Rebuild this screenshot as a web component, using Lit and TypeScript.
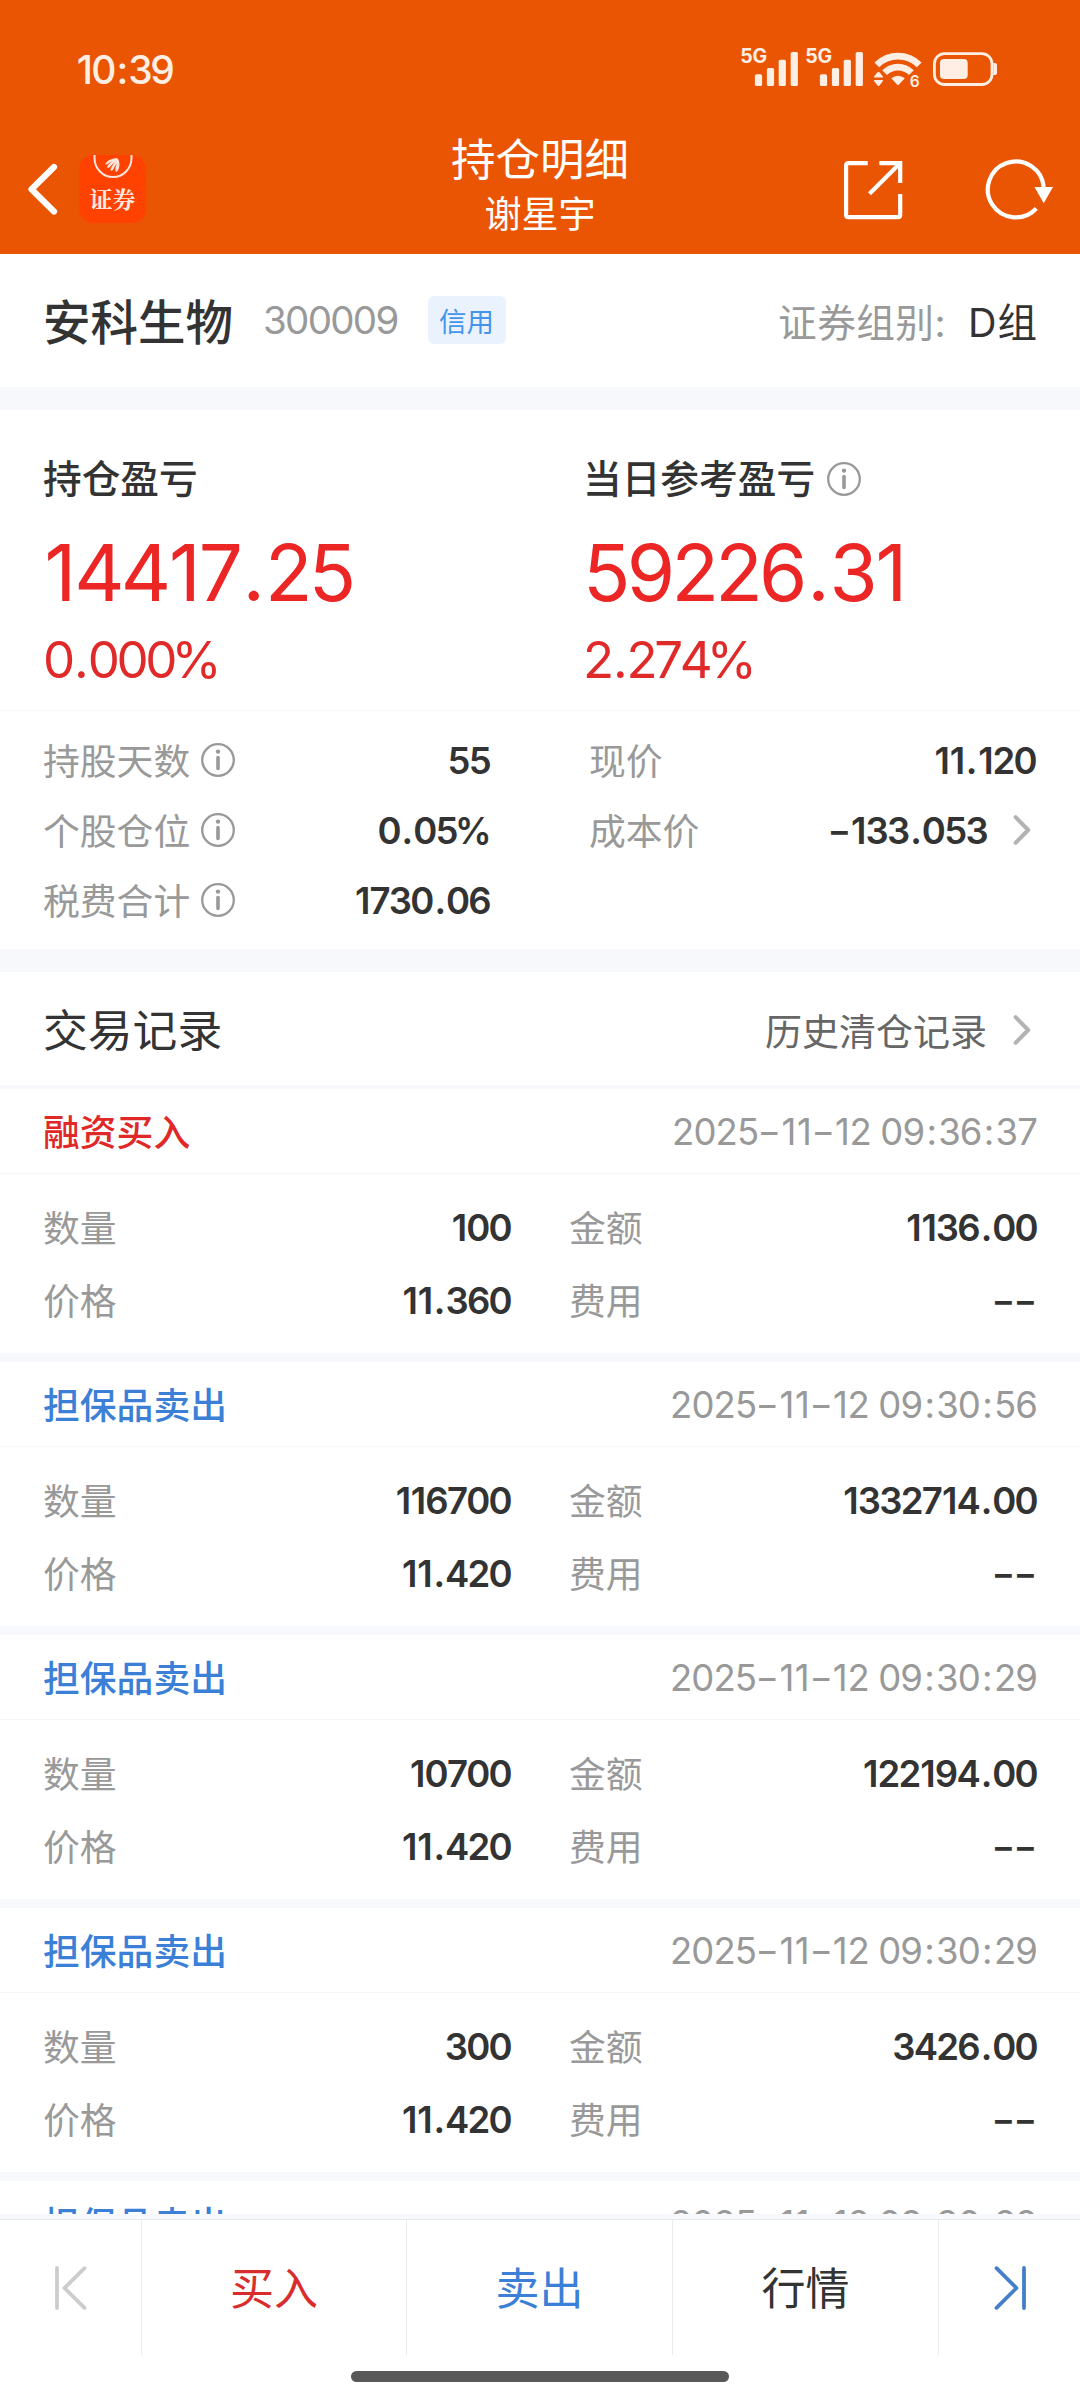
import { LitElement, html, css, svg } from "lit";
import { customElement, property } from "lit/decorators.js";

interface TradeRecord {
  kind: "buy" | "sell";
  title: string;
  time: string;
  quantity: string;
  price: string;
  amount: string;
  fee: string;
}

const RECORDS: TradeRecord[] = [
  { kind: "buy", title: "融资买入", time: "2025-11-12 09:36:37", quantity: "100", price: "11.360", amount: "1136.00", fee: "--" },
  { kind: "sell", title: "担保品卖出", time: "2025-11-12 09:30:56", quantity: "116700", price: "11.420", amount: "1332714.00", fee: "--" },
  { kind: "sell", title: "担保品卖出", time: "2025-11-12 09:30:29", quantity: "10700", price: "11.420", amount: "122194.00", fee: "--" },
  { kind: "sell", title: "担保品卖出", time: "2025-11-12 09:30:29", quantity: "300", price: "11.420", amount: "3426.00", fee: "--" },
  { kind: "sell", title: "担保品卖出", time: "2025-11-12 09:30:29", quantity: "300", price: "11.420", amount: "3426.00", fee: "--" },
];

const figureStyles = css`
  .figure { font-kerning: none; }
  .one { margin: 0 0.02em; }
  .dot { margin: 0 0.045em; }
  .colon { margin: 0 0.06em; }
  .percent { margin-left: -0.05em; }
  .dash { display: inline-block; width: 0.62em; text-align: center; letter-spacing: 0; transform: scaleX(1.4); }
`;

const GLYPH_CLASS: Record<string, string> = { "-": "dash", ".": "dot", ":": "colon", "1": "one", "%": "percent" };

/** Figures with a wide dash and looser punctuation. */
const figure = (text: string) =>
  text.split(/([-.:1%])/).map((part) =>
    GLYPH_CLASS[part] ? html`<span class=${GLYPH_CLASS[part]}>${part}</span>` : part);

const infoIcon = html`<svg class="info" width="34" height="34" viewBox="0 0 34 34" fill="none">
  <circle cx="17" cy="17" r="15.8" stroke="#999" stroke-width="2.3" />
  <circle cx="17" cy="8.6" r="2.2" fill="#999" />
  <path d="M17 14.5V25.5" stroke="#999" stroke-width="3.6" stroke-linecap="round" />
</svg>`;

const chevronIcon = html`<svg class="chevron" width="20" height="34" viewBox="0 0 20 34" fill="none">
  <path d="M3.6 4.2L16.2 17L3.6 29.8" stroke="#b3b3b3" stroke-width="4" stroke-linecap="round" stroke-linejoin="round" />
</svg>`;

@customElement("status-bar")
class StatusBar extends LitElement {
  static styles = [figureStyles, css`
    :host { display: flex; justify-content: space-between; height: 104px; padding: 35px 83px 0 76px; box-sizing: border-box; color: #ffeee3; }
    .time { font-size: 39px; line-height: 70px; font-weight: 500; letter-spacing: -2.4px; }
    .icons { display: block; }
    .gen { font: 700 19.5px "Inter", sans-serif; letter-spacing: -0.3px; }
    .six { font: 600 15.5px "Inter", sans-serif; }
  `];
  private signal(x: number) {
    return svg`<g transform="translate(${x} 0)" fill="#ffeee3">
      <text class="gen" x="0" y="27.6">5G</text>
      <rect x="14.6" y="39.3" width="7.2" height="11.7" rx="1.6" />
      <rect x="26.6" y="33" width="7.2" height="18" rx="1.6" />
      <rect x="38.4" y="24.7" width="7.2" height="26.3" rx="1.6" />
      <rect x="50.4" y="17" width="7.2" height="34" rx="1.6" />
    </g>`;
  }
  render() {
    return html`<div class="time figure">${figure("10:39")}</div>
      <svg class="icons" width="257" height="60" viewBox="0 0 257 60" fill="none">
        ${this.signal(0.3)} ${this.signal(65.3)}
        <g stroke="#ffeee3" stroke-width="6.8">
          <path d="M136.8 29.8A30 30 0 0 1 179.2 29.8" />
          <path d="M144.6 37.6A19 19 0 0 1 171.4 37.6" />
        </g>
        <path d="M151.2 43.2Q158 38.2 164.8 43.2L159 49.4Q158 50.4 157 49.4Z" fill="#ffeee3" />
        <path d="M134.2 42.6Q133.6 42 134.4 41L137.5 37.2Q138.5 36.2 139.5 37.2L142.6 41Q143.4 42 142.8 42.6ZM134.2 45Q133.6 45.6 134.4 46.6L137.5 50.6Q138.5 51.6 139.5 50.6L142.6 46.6Q143.4 45.6 142.8 45Z" fill="#ffeee3" />
        <text class="six" x="169.8" y="52" fill="#ffeee3">6</text>
        <rect x="194.4" y="18.7" width="57.6" height="30.8" rx="10" stroke="#ffeee3" stroke-width="2.8" />
        <rect x="200" y="24" width="27.7" height="20" rx="4" fill="#ffeee3" />
        <path d="M253.3 28H255Q257 28 257 30V38Q257 40 255 40H253.3Z" fill="#ffeee3" />
      </svg>`;
  }
}

@customElement("nav-bar")
class NavBar extends LitElement {
  static styles = css`
    :host { display: grid; grid-template-columns: 1fr auto 1fr; align-items: start; height: 150px; padding: 0 26px; box-sizing: border-box; color: #fff; }
    .left { display: flex; align-items: center; gap: 20px; padding-top: 51px; }
    .brand { width: 67px; height: 68px; border-radius: 14px; background: #ff4200; overflow: hidden; display: flex; flex-direction: column; align-items: center; }
    .brand-name { font: 700 23px/26px "Noto Serif CJK SC", "Noto Sans CJK SC", sans-serif; margin-top: 6px; color: #ffece4; }
    .arc { display: block; }
    .titles { text-align: center; padding-top: 26px; }
    .title { font-size: 44.5px; line-height: 60px; }
    .subtitle { font-size: 37px; line-height: 50px; }
    .right { display: flex; justify-content: flex-end; gap: 80px; padding-top: 55px; }
  `;
  render() {
    return html`<div class="left">
        <svg width="33" height="54" viewBox="0 0 33 54" fill="none">
          <path d="M28 5L5.5 27.3L28 49.5" stroke="#fff" stroke-width="6.2" stroke-linecap="round" stroke-linejoin="round" />
        </svg>
        <div class="brand">
          <svg class="arc" width="42" height="25" viewBox="0 0 42 25" fill="none">
            <path d="M2.5 0V3A18.5 19 0 0 0 39.500 3V0" stroke="#ffe5dc" stroke-width="2" />
            <path d="M13.200 9.500C14.500 5.500 20 3 25.500 3.200C28.500 7 28 14 24.500 17C22.300 16 23.500 11.500 25 8.500C22 11.500 21.500 15.500 19.500 15.800C17 15.500 20 10.500 23 7.500C19.500 9 18 13 16 13C14 12 16.500 9 20 6.500C17.500 7 15.500 10 13.200 9.500Z" fill="#ffe5dc" />
          </svg>
          <div class="brand-name">证券</div>
        </div>
      </div>
      <div class="titles">
        <div class="title">持仓明细</div>
        <div class="subtitle">谢星宇</div>
      </div>
      <div class="right">
        <svg width="62" height="62" viewBox="0 0 62 62" fill="none" stroke="#fff" stroke-width="4.2">
          <path d="M25.7 4.1H6.6Q4.1 4.1 4.1 6.6V55.7Q4.1 58.2 6.6 58.2H55.7Q58.2 58.2 58.2 55.7V35" />
          <path d="M37.3 4.1H58.2V24M27.5 34.8L57.5 4.8" />
        </svg>
        <svg width="70" height="62" viewBox="0 0 70 62" fill="none">
          <path d="M60.4 28A28 28 0 1 0 53 49.5" transform="translate(-.7 0)" stroke="#fff" stroke-width="4.2" />
          <path d="M50.500 28H69L59.700 44.300Z" fill="#fff" />
        </svg>
      </div>`;
  }
}

@customElement("trade-record")
class TradeRecordCard extends LitElement {
  @property({ attribute: false }) record!: TradeRecord;
  static styles = [figureStyles, css`
    :host { display: block; height: 264px; border-bottom: 9px solid #f6f8fb; background: #fff; flex: none; }
    .head { display: flex; justify-content: space-between; align-items: center; height: 85px; padding: 0 43px; border-bottom: 1px solid #f5f6f8; box-sizing: border-box; }
    .kind { font-size: 36.8px; font-weight: 500; padding-bottom: 3px; }
    .buy { color: #e02828; }
    .sell { color: #3b7fd6; }
    .time { font-size: 36.5px; letter-spacing: -0.9px; color: #999; padding-top: 2px; }
    .grid { display: grid; grid-template-columns: 468px 468px; column-gap: 58px; padding: 17px 0 0 43px; }
    .cell { display: flex; justify-content: space-between; align-items: center; height: 73px; }
    .label { font-size: 36.8px; color: #999; padding-bottom: 4px; }
    .value { font-size: 36.5px; font-weight: 600; letter-spacing: -1.7px; color: #333; padding-top: 1px; }
  `];
  private cell(label: string, value: string) {
    return html`<div class="cell"><span class="label">${label}</span><span class="value figure">${figure(value)}</span></div>`;
  }
  render() {
    const r = this.record;
    return html`<div class="head"><span class="kind ${r.kind}">${r.title}</span><span class="time figure">${figure(r.time)}</span></div>
      <div class="grid">
        ${this.cell("数量", r.quantity)} ${this.cell("金额", r.amount)}
        ${this.cell("价格", r.price)} ${this.cell("费用", r.fee)}
      </div>`;
  }
}

@customElement("action-bar")
class ActionBar extends LitElement {
  static styles = css`
    :host { display: block; height: 186px; flex: none; background: #fff; border-top: 5px solid #f6f8fb; box-sizing: border-box; }
    .actions { display: grid; grid-template-columns: 142px 265px 266px 266px 141px; height: 136px; border-top: 1px solid #e8eaec; box-sizing: border-box; }
    .action { display: flex; align-items: center; justify-content: center; font-size: 44px; border-right: 1px solid #e9ebed; }
    .action:last-child { border-right: 0; }
    .text { padding-bottom: 3px; }
    .buy { color: #d92c2c; }
    .sell { color: #3b7fd6; }
    .quote { color: #333; }
    .home { width: 378px; height: 11px; border-radius: 6px; background: #585858; margin: 16px auto 0; }
  `;
  render() {
    return html`<div class="actions">
        <div class="action"><svg width="36" height="48" viewBox="0 0 36 48" fill="none" stroke="#ccc" stroke-width="3.8" stroke-linecap="round" stroke-linejoin="round"><path d="M4 4V44M31.5 4.2L11.5 24L31.5 43.8" /></svg></div>
        <div class="action text buy">买入</div>
        <div class="action text sell">卖出</div>
        <div class="action text quote">行情</div>
        <div class="action"><svg width="36" height="48" viewBox="0 0 36 48" fill="none" stroke="#437fca" stroke-width="3.8" stroke-linecap="round" stroke-linejoin="round"><path d="M32 4V44M4.5 4.2L24.5 24L4.5 43.8" /></svg></div>
      </div>
      <div class="home"></div>`;
  }
}

@customElement("app-root")
class AppRoot extends LitElement {
  static styles = [figureStyles, css`
    :host { display: flex; flex-direction: column; width: 1080px; height: 2400px; overflow: hidden; background: #fff; color: #333; font-family: "Inter", "Noto Sans CJK SC", sans-serif; font-feature-settings: "calt" 0; white-space: nowrap; }
    .top { background: #ea5504; height: 254px; flex: none; }
    .band { height: 23px; background: #f6f8fb; flex: none; }
    .stock { display: flex; align-items: center; height: 133px; padding: 0 44px 1px 43px; box-sizing: border-box; flex: none; }
    .name { font-size: 47.5px; font-weight: 500; padding-bottom: 1px; }
    .code { font-size: 38.5px; letter-spacing: -1.7px; color: #999; margin-left: 30px; }
    .badge { display: flex; align-items: center; justify-content: center; width: 78px; height: 48px; border-radius: 6px; background: #eaf3fd; color: #4494ea; font-size: 27.5px; margin-left: 30px; padding-bottom: 1px; box-sizing: border-box; }
    .group { margin-left: auto; font-size: 38.7px; display: flex; align-items: baseline; gap: 22px; padding-bottom: 2px; }
    .group-label { color: #999; letter-spacing: 0.4px; }
    .group-value { font-size: 39.5px; letter-spacing: 1px; margin-right: -2px; }
    .summary { display: grid; grid-template-columns: 540px 540px; height: 301px; border-bottom: 1px solid #f5f6f8; padding-top: 43px; box-sizing: border-box; flex: none; }
    .col { padding-left: 43px; }
    .heading { display: flex; align-items: center; gap: 12px; font-size: 38.7px; line-height: 52px; font-weight: 500; }
    .big { font-size: 78px; line-height: 92px; margin-top: 22px; letter-spacing: -3.7px; color: #ec2525; }
    .pct { font-size: 51px; line-height: 60px; margin-top: 11px; letter-spacing: -3.4px; color: #e02a2a; }
    .facts { display: grid; grid-template-columns: 447px 447px; column-gap: 99px; grid-auto-rows: 70px; padding: 14px 0 0 43px; height: 238px; box-sizing: border-box; flex: none; }
    .fact { display: flex; align-items: center; }
    .label { font-size: 36.8px; color: #999; padding-bottom: 3px; }
    .fact .info { margin-left: 11px; }
    .value { margin-left: auto; font-size: 36.5px; font-weight: 600; letter-spacing: -1.7px; padding-top: 2px; }
    .chevron { margin: 0 4px 0 25px; flex: none; }
    .records-head { display: flex; align-items: center; justify-content: space-between; height: 117px; padding: 0 44px 0 43px; border-bottom: 4px solid #f6f8fb; box-sizing: border-box; flex: none; }
    .records-title { font-size: 44.8px; padding-bottom: 3px; }
    .history { display: flex; align-items: center; font-size: 37px; color: #666; padding-top: 3px; }
    .list { height: 1125px; overflow: hidden; display: flex; flex-direction: column; flex: none; }
  `];
  render() {
    return html`
      <div class="top"><status-bar></status-bar><nav-bar></nav-bar></div>
      <div class="stock">
        <span class="name">安科生物</span><span class="code">300009</span><span class="badge">信用</span>
        <div class="group"><span class="group-label">证券组别:</span><span class="group-value">D组</span></div>
      </div>
      <div class="band"></div>
      <div class="summary">
        <div class="col">
          <div class="heading">持仓盈亏</div>
          <div class="big figure">${figure("14417.25")}</div>
          <div class="pct figure">${figure("0.000%")}</div>
        </div>
        <div class="col">
          <div class="heading">当日参考盈亏${infoIcon}</div>
          <div class="big figure">${figure("59226.31")}</div>
          <div class="pct figure">${figure("2.274%")}</div>
        </div>
      </div>
      <div class="facts">
        <div class="fact"><span class="label">持股天数</span>${infoIcon}<span class="value figure">55</span></div>
        <div class="fact"><span class="label">现价</span><span class="value figure">${figure("11.120")}</span></div>
        <div class="fact"><span class="label">个股仓位</span>${infoIcon}<span class="value figure">${figure("0.05%")}</span></div>
        <div class="fact"><span class="label">成本价</span><span class="value figure">${figure("-133.053")}</span>${chevronIcon}</div>
        <div class="fact"><span class="label">税费合计</span>${infoIcon}<span class="value figure">${figure("1730.06")}</span></div>
      </div>
      <div class="band"></div>
      <div class="records-head">
        <span class="records-title">交易记录</span>
        <div class="history">历史清仓记录${chevronIcon}</div>
      </div>
      <div class="list">${RECORDS.map((r) => html`<trade-record .record=${r}></trade-record>`)}</div>
      <action-bar></action-bar>
    `;
  }
}
